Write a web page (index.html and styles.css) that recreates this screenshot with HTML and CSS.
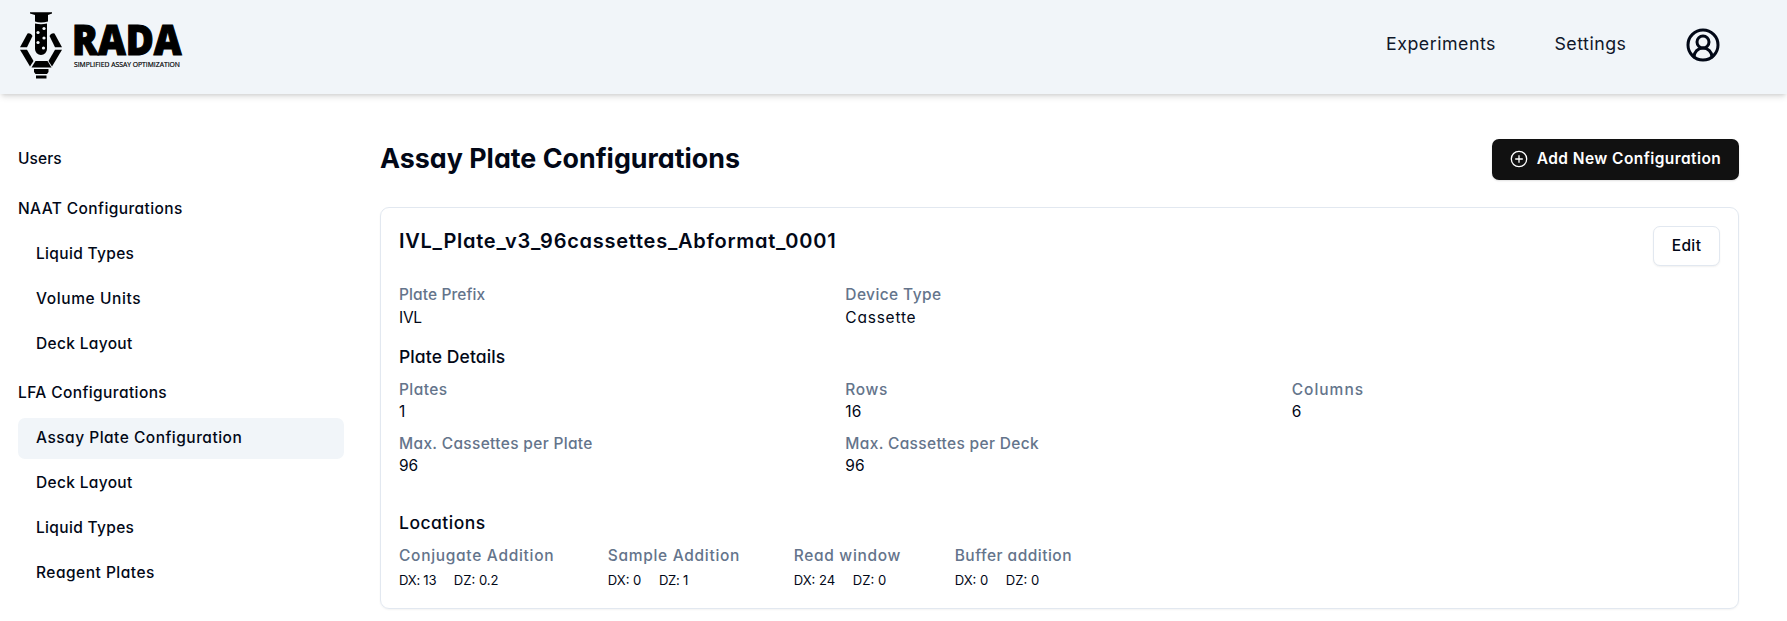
FILE: index.html
```html
<!DOCTYPE html>
<html lang="en">
<head>
<meta charset="utf-8">
<title>RADA - Assay Plate Configurations</title>
<link rel="stylesheet" href="styles.css">
</head>
<body>
<header class="topbar">
  <svg class="logo" width="180" height="76" viewBox="0 0 180 76" role="img" aria-label="RADA">
    <path d="M15 4.200h22v1.400l-4 1.400v6.500q-7.500 2-13 0V7l-5-1.400z"/>
    <path d="M20 15.500q6 1.500 12 0V41a6 6 0 0 1-12 0z"/>
    <g class="bubble">
      <circle cx="29" cy="20.500" r="1.600"/><circle cx="23" cy="24.500" r="1.600"/>
      <circle cx="29" cy="30" r="1.600"/><circle cx="23" cy="34.500" r="1.600"/>
      <circle cx="28.500" cy="40" r="1.600"/>
    </g>
    <path d="M12.500 25.500q3.500-1 5 2.500L12 39.300H5z"/>
    <path d="M39.500 25.500q-3.500-1-5 2.500L40 39.300h7z"/>
    <path d="M5 41.800h7L18.500 53l-3.500 5.500z"/>
    <path d="M47 41.800h-7L33.500 53l3.500 5.500z"/>
    <path d="M20.500 53h12l4 6.500h-20z"/>
    <path d="M19 61h14.500v3L32 66H20.500L19 64z"/>
    <path d="M21 67.500h10.500v3H21z"/>
    <text class="logo-name" x="57" y="47.300" textLength="109.500" lengthAdjust="spacingAndGlyphs">RADA</text>
    <text class="logo-tag" x="59" y="58.800" textLength="106" lengthAdjust="spacingAndGlyphs">SIMPLIFIED ASSAY OPTIMIZATION</text>
  </svg>
  <nav class="topnav">
    <a class="toplink">Experiments</a>
    <a class="toplink">Settings</a>
    <svg class="avatar" viewBox="0 0 24 24"><path d="M18 20a6 6 0 0 0-12 0"/><circle cx="12" cy="10" r="4"/><circle cx="12" cy="12" r="10"/></svg>
  </nav>
</header>
<div class="layout">
  <aside class="sidebar">
    <a class="side-item top ls-2">Users</a>
    <h3 class="side-head ls-5">NAAT Configurations</h3>
    <div class="side-group">
      <a class="side-item ls-4">Liquid Types</a>
      <a class="side-item ls-7">Volume Units</a>
      <a class="side-item ls-4">Deck Layout</a>
    </div>
    <h3 class="side-head ls-5">LFA Configurations</h3>
    <div class="side-group">
      <a class="side-item active ls-6">Assay Plate Configuration</a>
      <a class="side-item ls-4">Deck Layout</a>
      <a class="side-item ls-4">Liquid Types</a>
      <a class="side-item ls-6">Reagent Plates</a>
    </div>
  </aside>
  <main class="main">
    <div class="page-head">
      <h1 class="title">Assay Plate Configurations</h1>
      <button class="btn primary"><svg class="plus" viewBox="0 0 18 18"><circle cx="9" cy="9" r="7.700"/><path d="M9 5.200v7.600M5.200 9h7.600"/></svg><span>Add New Configuration</span></button>
    </div>
    <section class="card">
      <div class="card-head">
        <h2 class="card-title">IVL_Plate_v3_96cassettes_Abformat_0001</h2>
        <button class="btn outline">Edit</button>
      </div>
      <div class="grid summary">
        <div><div class="label ls-2">Plate Prefix</div><div class="value ls-tight">IVL</div></div>
        <div><div class="label ls-5">Device Type</div><div class="value ls-9">Cassette</div></div>
      </div>
      <h3 class="section ls-2">Plate Details</h3>
      <div class="grid details">
        <div><div class="label ls-5">Plates</div><div class="value">1</div></div>
        <div><div class="label ls-7">Rows</div><div class="value">16</div></div>
        <div><div class="label ls-11">Columns</div><div class="value">6</div></div>
        <div><div class="label ls-4">Max. Cassettes per Plate</div><div class="value">96</div></div>
        <div><div class="label ls-4">Max. Cassettes per Deck</div><div class="value">96</div></div>
      </div>
      <h3 class="section locations-head ls-6">Locations</h3>
      <div class="locations">
        <div><div class="label ls-8">Conjugate Addition</div><div class="coords"><span class="ls-tight">DX: 13</span><span>DZ: 0.2</span></div></div>
        <div><div class="label ls-8">Sample Addition</div><div class="coords"><span>DX: 0</span><span class="ls-tight">DZ: 1</span></div></div>
        <div><div class="label ls-8">Read window</div><div class="coords"><span>DX: 24</span><span>DZ: 0</span></div></div>
        <div><div class="label ls-6">Buffer addition</div><div class="coords"><span>DX: 0</span><span>DZ: 0</span></div></div>
      </div>
    </section>
  </main>
</div>
</body>
</html>
```
FILE: styles.css
```css
* { box-sizing: border-box; }
body {
  margin: 0;
  height: 621px;
  overflow: hidden;
  background: #fff;
  color: #020817;
  font: 400 15.5px/22px Inter, "Liberation Sans", sans-serif;
  font-feature-settings: "cv11";
}
h1, h2, h3 { margin: 0; }

.topbar {
  display: flex;
  justify-content: space-between;
  height: 94px;
  padding: 8px 66px 0 15px;
  background: #f1f5f9;
  box-shadow: 0 4px 6px -1px rgba(0, 0, 0, .12), 0 2px 4px -2px rgba(0, 0, 0, .12);
}
.logo { overflow: visible; }
.logo-name {
  font: 800 42.5px "Open Sans", sans-serif;
  stroke: #000;
  stroke-width: 1.2;
}
.logo-tag { font: 500 7.2px "Open Sans", sans-serif; stroke: #000; stroke-width: .2; }
.bubble { fill: #f1f5f9; }
.topnav { display: flex; align-items: flex-start; padding-top: 19px; }
.toplink {
  font-size: 17.8px;
  line-height: 33.5px;
  letter-spacing: .5px;
  color: #0f172a;
  margin-right: 58.5px;
}
.avatar { width: 36px; height: 36px; fill: none; stroke: #020817; stroke-width: 2; stroke-linecap: round; }

.layout { display: flex; gap: 36px; padding: 45px 48px 0 18px; }
.sidebar { width: 326px; font-weight: 500; }
.side-item {
  display: flex;
  align-items: center;
  height: 40.5px;
  padding: 0 18px;
  border-radius: 7px;
}
.side-item.top { padding: 0; }
.side-item.active { background: #f1f5f9; }
.side-group { display: flex; flex-direction: column; gap: 4.5px; }
.side-head { height: 54px; padding-top: 18px; font-size: 15.5px; font-weight: 500; }

.main { flex: 1; }
.page-head { display: flex; justify-content: space-between; align-items: flex-start; height: 68px; }
.title { font-size: 26.8px; line-height: 38px; font-weight: 700; letter-spacing: .02px; }
.btn {
  display: flex;
  align-items: center;
  justify-content: center;
  font: inherit;
  font-feature-settings: inherit;
  border-radius: 7px;
  color: inherit;
}
.btn.primary {
  width: 247px;
  height: 41px;
  gap: 9px;
  border: 0;
  padding-bottom: 3px;
  background: #111;
  color: #fff;
  font-weight: 600;
  letter-spacing: .42px;
  box-shadow: 0 1px 2px rgba(0, 0, 0, .12);
}
.plus { width: 18px; height: 18px; fill: none; stroke: #fff; stroke-width: 1.3; }
.btn.outline {
  width: 67px;
  height: 40px;
  padding-bottom: 1px;
  background: #fff;
  border: 1px solid #e2e8f0;
  font-weight: 500;
  letter-spacing: .4px;
  box-shadow: 0 1px 2px rgba(0, 0, 0, .06);
}

.card {
  height: 402px;
  padding: 18px;
  border: 1px solid #e2e8f0;
  border-radius: 9px;
  box-shadow: 0 1px 2px rgba(0, 0, 0, .05);
}
.card-head { display: flex; justify-content: space-between; align-items: flex-start; height: 41px; }
.card-title { font-size: 20px; line-height: 30px; font-weight: 600; letter-spacing: .74px; }
.grid { display: grid; grid-template-columns: repeat(3, 1fr); column-gap: 18px; }
.label { font-weight: 500; color: #64748b; }
.summary { margin-top: 16px; line-height: 23px; }
.section { margin-top: 14px; font-size: 17.5px; line-height: 27px; font-weight: 500; }
.details { margin-top: 9px; row-gap: 10px; }
.section.locations-head { margin-top: 32px; }
.locations { display: flex; gap: 53.5px; margin-top: 8px; line-height: 23px; }
.coords { display: flex; gap: 17.5px; margin-top: 3px; font-size: 13.1px; line-height: 20px; }

.ls-tight { letter-spacing: -.26px; }
.ls-2 { letter-spacing: .1px; }
.ls-4 { letter-spacing: .33px; }
.ls-5 { letter-spacing: .4px; }
.ls-6 { letter-spacing: .49px; }
.ls-7 { letter-spacing: .6px; }
.ls-8 { letter-spacing: .7px; }
.ls-9 { letter-spacing: .78px; }
.ls-11 { letter-spacing: 1px; }
```
